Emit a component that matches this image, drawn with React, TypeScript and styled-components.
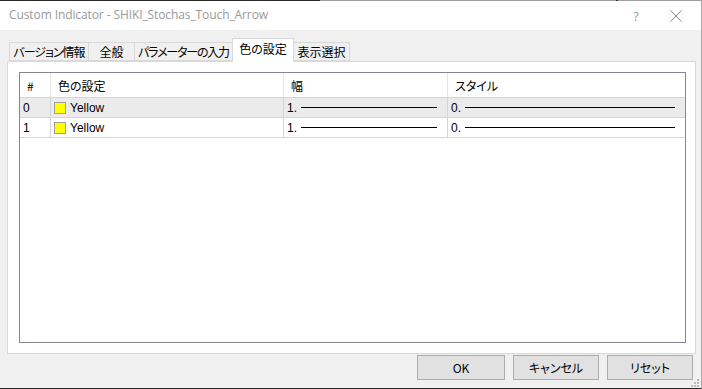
import React from "react";
import styled, { createGlobalStyle } from "styled-components";

const Global = createGlobalStyle`
  html, body { margin: 0; padding: 0; background: #f0f0f0; overflow: hidden; }
  #root { width: 702px; height: 389px; }
`;

const UI = `"Noto Sans CJK JP", "Noto Sans", sans-serif`;

const Window = styled.div`
  width: 702px;
  height: 389px;
  box-sizing: border-box;
  display: flex;
  flex-direction: column;
  background: #f0f0f0;
  border-right: 1px solid #a9a9a9;
  border-bottom: 1px solid #262626;
  position: relative;
  font-family: ${UI};
  font-feature-settings: "palt";
`;

const TopEdge = styled.div`
  height: 1px;
  flex: none;
  background: linear-gradient(to right, #2a2a2a 0, #2a2a2a 320px, #a0a0a0 320px, #a0a0a0 616px, #333 616px, #333 618px, #a0a0a0 618px);
`;

const TitleBar = styled.div`
  height: 29px;
  flex: none;
  background: #fff;
  display: flex;
  align-items: center;
  padding-left: 9px;
`;

const Title = styled.div`
  flex: 1;
  font-family: "Open Sans", "Noto Sans", sans-serif;
  font-size: 12px;
  color: #9a9a9a;
  letter-spacing: -0.1px;
  padding-bottom: 2px;
`;

const TitleButton = styled.div<{ $w: number }>`
  width: ${(p) => p.$w}px;
  height: 29px;
  display: flex;
  align-items: center;
  justify-content: center;
  color: #9a9a9a;
  font-family: "Open Sans", sans-serif;
  font-size: 13px;
`;

const Body = styled.div`
  flex: 1;
  display: flex;
  flex-direction: column;
  padding: 0 5px 0 7px;
`;

const TabRow = styled.div`
  height: 31px;
  display: flex;
  align-items: flex-end;
  padding-left: 2px;
  position: relative;
  z-index: 1;
`;

const Tab = styled.div<{ $w: number; $active?: boolean; $ls?: number }>`
  box-sizing: border-box;
  width: ${(p) => p.$w}px;
  height: ${(p) => (p.$active ? 24 : 19)}px;
  margin-left: -1px;
  margin-bottom: ${(p) => (p.$active ? -1 : 0)}px;
  border: 1px solid #d9d9d9;
  border-bottom: ${(p) => (p.$active ? "none" : "1px solid #d9d9d9")};
  background: ${(p) => (p.$active ? "#fff" : "#f0f0f0")};
  font-size: 12px;
  letter-spacing: ${(p) => p.$ls ?? 0}px;
  white-space: nowrap;
  color: #000;
  display: flex;
  align-items: ${(p) => (p.$active ? "flex-start" : "center")};
  padding-top: ${(p) => (p.$active ? 1 : 0)}px;
  justify-content: center;
  line-height: 17px;
  &:first-child { margin-left: 0; }
`;

const Panel = styled.div`
  box-sizing: border-box;
  height: 293px;
  background: #fff;
  border: 1px solid #d9d9d9;
  padding: 10px 9px 10px 11px;
  display: flex;
`;

const List = styled.div`
  flex: 1;
  border: 1px solid #828790;
  display: flex;
  flex-direction: column;
  font-size: 12px;
`;

const HeaderRow = styled.div`
  height: 24px;
  display: flex;
  border-bottom: 1px solid #d5d5d5;
`;

const Row = styled.div<{ $shade?: boolean }>`
  height: 19px;
  display: flex;
  border-bottom: 1px solid #d5d5d5;
  background: ${(p) => (p.$shade ? "#ebebeb" : "#fff")};
`;

const Cell = styled.div<{ $w?: number; $head?: boolean }>`
  box-sizing: border-box;
  ${(p) => (p.$w ? `width: ${p.$w}px; flex: none;` : "flex: 1;")}
  border-right: 1px solid ${(p) => (p.$head ? "#e5e5e5" : "#d5d5d5")};
  display: flex;
  align-items: center;
  padding-left: ${(p) => (p.$head ? 7 : 3)}px;
  gap: 3px;
  white-space: nowrap;
  &:last-child { border-right: none; }
`;

const Swatch = styled.span`
  box-sizing: border-box;
  width: 12px;
  height: 12px;
  background: #ffff00;
  border: 1px solid #a0a0a0;
  flex: none;
  margin-right: 1px;
`;

const Value = styled.span`
  font-family: "Liberation Sans", sans-serif;
  font-size: 12px;
`;

const LineSample = styled.span<{ $w: number }>`
  width: ${(p) => p.$w}px;
  height: 1px;
  background: #000;
  margin-left: 1px;
  flex: none;
`;

const Buttons = styled.div`
  display: flex;
  justify-content: flex-end;
  gap: 8px;
  padding: 1px 3px 0 0;
`;

const Button = styled.div<{ $w: number }>`
  box-sizing: border-box;
  width: ${(p) => p.$w}px;
  height: 25px;
  background: #e1e1e1;
  border: 1px solid #adadad;
  display: flex;
  align-items: center;
  justify-content: center;
  font-size: 12px;
  color: #000;
`;

const Grip = styled.svg`
  position: absolute;
  right: 2px;
  bottom: 1px;
`;

const rows = [0, 1];

export default function App() {
  return (
    <>
      <Global />
      <Window>
        <TopEdge />
        <TitleBar>
          <Title>Custom Indicator - SHIKI_Stochas_Touch_Arrow</Title>
          <TitleButton $w={30}>?</TitleButton>
          <TitleButton $w={50}>
            <svg width="12" height="12" viewBox="0 0 12 12">
              <path d="M0.5 0.5 L11.5 11.5 M11.5 0.5 L0.5 11.5" stroke="#8a8a8a" strokeWidth="1" fill="none" />
            </svg>
          </TitleButton>
        </TitleBar>
        <Body>
          <TabRow>
            <Tab $w={80} $ls={-1}>バージョン情報</Tab>
            <Tab $w={47}>全般</Tab>
            <Tab $w={99} $ls={-1.2}>パラメーターの入力</Tab>
            <Tab $w={62} $active>色の設定</Tab>
            <Tab $w={57}>表示選択</Tab>
          </TabRow>
          <Panel>
            <List>
              <HeaderRow>
                <Cell $w={31} $head>#</Cell>
                <Cell $w={233} $head>色の設定</Cell>
                <Cell $w={164} $head>幅</Cell>
                <Cell $head>スタイル</Cell>
              </HeaderRow>
              {rows.map((i) => (
                <Row key={i} $shade={i === 0}>
                  <Cell $w={31}>
                    <Value>{i}</Value>
                  </Cell>
                  <Cell $w={233}>
                    <Swatch />
                    <Value>Yellow</Value>
                  </Cell>
                  <Cell $w={164}>
                    <Value>1.</Value>
                    <LineSample $w={136} />
                  </Cell>
                  <Cell>
                    <Value>0.</Value>
                    <LineSample $w={210} />
                  </Cell>
                </Row>
              ))}
            </List>
          </Panel>
          <Buttons>
            <Button $w={88}>OK</Button>
            <Button $w={86}>キャンセル</Button>
            <Button $w={86}>リセット</Button>
          </Buttons>
        </Body>
        <Grip width="8" height="8" viewBox="0 0 8 8">
          <rect x="6" y="0" width="2" height="2" fill="#b8b8b8" />
          <rect x="3" y="3" width="2" height="2" fill="#b8b8b8" />
          <rect x="6" y="3" width="2" height="2" fill="#b8b8b8" />
          <rect x="0" y="6" width="2" height="2" fill="#b8b8b8" />
          <rect x="3" y="6" width="2" height="2" fill="#b8b8b8" />
          <rect x="6" y="6" width="2" height="2" fill="#b8b8b8" />
        </Grip>
      </Window>
    </>
  );
}
